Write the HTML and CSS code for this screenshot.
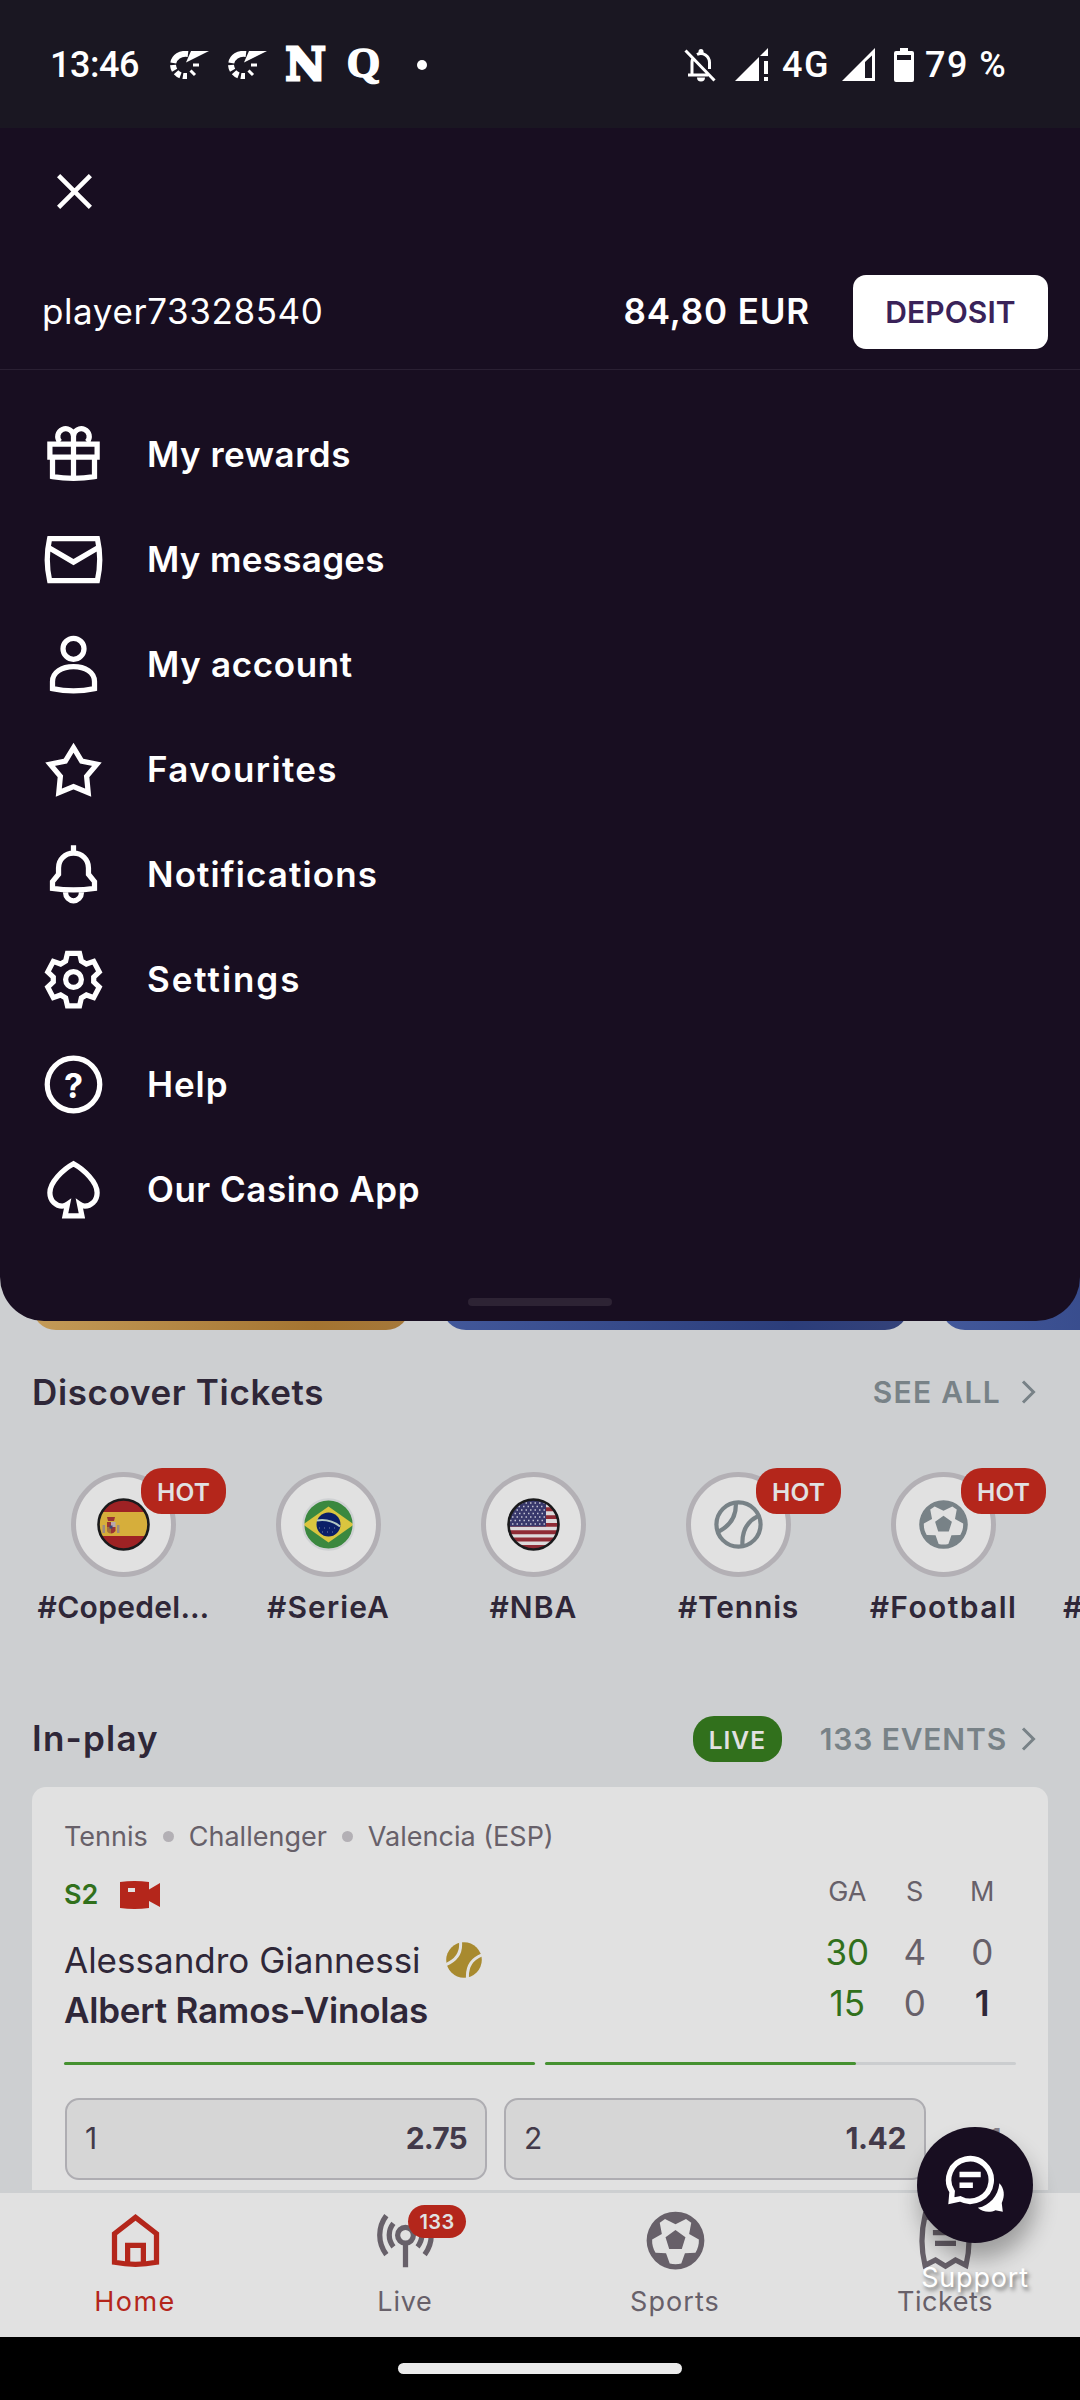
FILE: index.html
```html
<!DOCTYPE html>
<html lang="en">
<head>
<meta charset="utf-8">
<title>Player menu</title>
<link rel="stylesheet" href="styles.css">
</head>
<body>
<svg class="defs" aria-hidden="true">
  <symbol id="football" viewBox="0 0 24 24">
    <path fill="currentColor" fill-rule="evenodd" d="M12 1A11 11 0 1 0 12 23 11 11 0 1 0 12 1ZM12 5.8 16 3.8 18 5.2 17.2 9.5 20.9 11.6C21 13.5 20.5 15.2 19.6 16.7L15.6 16.9 14.2 20.8Q12 21.3 9.8 20.8L8.4 16.9 4.4 16.7C3.5 15.2 3 13.5 3.1 11.6L6.8 9.5 6 5.2 8 3.8ZM12 8 8.2 10.8 9.6 15.2H14.4L15.8 10.8Z"/>
  </symbol>
  <symbol id="swoosh" viewBox="0 0 39 28">
    <path fill="#fff" d="M39 0 16 11.5 21 0Z"/>
    <path fill="none" stroke="#fff" stroke-width="6" d="M18 3C10 2 4.500 6 3.300 12"/>
    <path fill="none" stroke="#fff" stroke-width="6" stroke-dasharray="5.500 2.500" d="M3 14C3.500 20 8 25 14.500 25.200"/>
    <path fill="none" stroke="#fff" stroke-width="3" d="M15.500 22V28M20.500 19.500 25 24M23 14H29"/>
  </symbol>
  <symbol id="chevron" viewBox="0 0 16 24">
    <path fill="none" stroke="currentColor" stroke-width="3" d="M2 1.500 12.500 12 2 22.500"/>
  </symbol>
</svg>

<header class="status">
  <span class="clock">13:46</span>
  <svg class="swoosh"><use href="#swoosh"/></svg>
  <svg class="swoosh"><use href="#swoosh"/></svg>
  <span class="logo-n">N</span>
  <span class="logo-q">Q</span>
  <span class="more"></span>
  <div class="status-right">
    <svg width="32" height="34" viewBox="0 0 32 34" fill="none" stroke="#fff" stroke-width="3">
      <path d="M1.500 2.500 30.500 32.500M4 27H24M8 27V14Q8 12 9 10.500M13 6.500C19 3.500 25.500 8 25.500 14.500V21"/>
      <path fill="#fff" stroke="none" d="M14.500 5V3.500a2.500 2.500 0 0 1 5 0V6ZM13 29.500H21a4 4 0 0 1-8 0Z"/>
    </svg>
    <svg width="33" height="34" viewBox="0 0 33 34" fill="#fff"><path d="M0 33 24 9V33ZM25 8 33 0V8ZM29 13H33V26H29ZM29 29H33V33H29Z"/></svg>
    <span class="net">4G</span>
    <svg width="33" height="34" viewBox="0 0 33 34" fill="#fff"><path fill-rule="evenodd" d="M0 33 33 0V33ZM23 14V30H30V7.500Z"/></svg>
    <svg width="20" height="34" viewBox="0 0 20 34" fill="#fff"><path fill-rule="evenodd" d="M6 0H14V3H18Q20 3 20 5V32Q20 34 18 34H2Q0 34 0 32V5Q0 3 2 3H6ZM3 7V12H17V7Z"/></svg>
    <span class="charge">79 %</span>
  </div>
</header>

<section class="drawer">
  <div class="close-row">
    <svg width="35" height="35" viewBox="0 0 35 35" fill="none" stroke="#fff" stroke-width="4.500"><path d="M1.600 1.600 33.400 33.400M33.400 1.600 1.600 33.400"/></svg>
  </div>
  <div class="account">
    <span class="player">player73328540</span>
    <span class="balance">84,80 EUR</span>
    <button class="deposit">DEPOSIT</button>
  </div>
  <nav class="menu">
    <a class="entry"><svg class="icon" viewBox="0 0 24 24"><path d="M3 8H21V13H3ZM4 13V20.400Q12 21.700 20 20.400V13M12 4.500V21M12 5a3 3 0 1 0-5.200 2.200M12 5a3 3 0 1 1 5.200 2.200"/></svg><span class="t-rewards">My rewards</span></a>
    <a class="entry"><svg class="icon" viewBox="0 0 24 24"><path d="M2.900 4H21.100Q22.900 12 21.100 20H2.900Q1.100 12 2.900 4ZM2.500 7.400 12 13 21.500 7.400"/></svg><span class="t-messages">My messages</span></a>
    <a class="entry"><svg class="icon" viewBox="0 0 24 24"><circle cx="12" cy="6" r="4"/><path d="M4 21.200V18.500C4 15 7.500 12.800 12 12.800S20 15 20 18.500V21.200Q12 22.900 4 21.200Z"/></svg><span class="t-account">My account</span></a>
    <a class="entry"><svg class="icon" viewBox="0 0 24 24"><path d="M12 3.700 15.100 8.800 20.900 10 17 14.600 17.600 20.800 12 18.500 6.400 20.800 7 14.600 3.100 10 8.900 8.800Z"/></svg><span class="t-favourites">Favourites</span></a>
    <a class="entry"><svg class="icon" viewBox="0 0 24 24"><path d="M12 .9V4M4 17.300V14.700L6.300 11.900V9.500C6.300 6.300 8.800 3.900 12 3.900S17.700 6.300 17.700 9.500V11.900L20 14.700V17.300Q12 18.500 4 17.300ZM9 18V19a3 3 0 0 0 6 0V18"/></svg><span class="t-notifications">Notifications</span></a>
    <a class="entry"><svg class="icon" viewBox="0 0 24 24"><circle cx="12" cy="12" r="3"/><path d="M9.700 2H14.300L15 5 16.900 6.100 19.700 5.100 21.800 9.100 19.700 11.100V12.900L21.800 14.900 19.700 18.900 16.900 17.900 15 19 14.300 22H9.700L9 19 7.100 17.900 4.300 18.900 2.200 14.900 4.300 12.900V11.100L2.200 9.100 4.300 5.100 7.100 6.100 9 5Z"/></svg><span class="t-settings">Settings</span></a>
    <a class="entry"><svg class="icon" viewBox="0 0 24 24"><circle cx="12" cy="12" r="10"/><text class="mark" x="12" y="17" text-anchor="middle">?</text></svg><span class="t-help">Help</span></a>
    <a class="entry"><svg class="icon" viewBox="0 0 24 24"><path d="M12 2.200C16.200 4.500 21 9.300 21 13.200C21 16.500 18.500 18.300 16.300 18.300Q15.300 18.300 14.300 17.600L15.200 22H8.800L9.700 17.600Q8.700 18.300 7.700 18.300C5.500 18.300 3 16.500 3 13.200C3 9.300 7.800 4.500 12 2.200Z"/></svg><span class="t-casino">Our Casino App</span></a>
  </nav>
  <span class="handle"></span>
</section>

<main class="page">
  <div class="banners">
    <div class="banner gold"></div>
    <div class="banner blue"></div>
    <div class="banner blue next"></div>
  </div>

  <div class="section-head discover">
    <h2 class="t-discover">Discover Tickets</h2>
    <a class="more-link see-all">SEE ALL<svg class="chevron"><use href="#chevron"/></svg></a>
  </div>

  <div class="tags">
    <div class="tag">
      <div class="disc">
        <svg width="53" height="53" viewBox="0 0 53 53">
          <clipPath id="flag"><circle cx="26.500" cy="26.500" r="25"/></clipPath>
          <g clip-path="url(#flag)"><path fill="#9e2224" d="M0 0H53V53H0Z"/><path fill="#d6ae3b" d="M0 14H53V38H0Z"/>
          <path fill="#9c8a82" d="M5.500 27h2.500v8H5.500zM20 27h2.500v8H20z"/><path fill="#9a3433" d="M10 19h8l-1 4h-6zM10 24h4v5h-4zM14 29h4.500v4q-2 2.500-4.500 2.500z"/><path fill="#b9a6ad" d="M14 24h4.500v5H14z"/><path fill="#a5703a" d="M10 29h4v6.500q-4-.5-4-3z"/><path fill="#3a4473" d="M12.500 27.500h3v3h-3z"/></g>
          <circle cx="26.500" cy="26.500" r="25" fill="none" stroke="#1a1a1c" stroke-width="2.600"/>
        </svg>
        <span class="pill hot">HOT</span>
      </div>
      <span class="tag-name n-cope">#Copedel…</span>
    </div>
    <div class="tag">
      <div class="disc">
        <svg width="53" height="53" viewBox="0 0 53 53">
          <g clip-path="url(#flag)"><path fill="#3b883f" d="M0 0H53V53H0Z"/><path fill="#dac53f" d="M1 26.500 26.500 8.500 52 26.500 26.500 44.500Z"/><circle cx="26.500" cy="26.500" r="12" fill="#0b1f68"/><path fill="none" stroke="#b5c9c4" stroke-width="2" d="M15 22.500Q28 20.500 38 28.500"/><path fill="none" stroke="#7482a5" stroke-dasharray="1 4" d="M17 30H36M20 34H33"/></g>
          <circle cx="26.500" cy="26.500" r="25.200" fill="none" stroke="#cfd1d3" stroke-width="2.200"/>
        </svg>
      </div>
      <span class="tag-name n-serie">#SerieA</span>
    </div>
    <div class="tag">
      <div class="disc">
        <svg width="53" height="53" viewBox="0 0 53 53">
          <g clip-path="url(#flag)"><path fill="#dcdadb" d="M0 0H53V53H0Z"/><path fill="none" stroke="#8f2b35" stroke-width="3.900" d="M0 3.500H53M0 11.300H53M0 19.100H53M0 26.900H53M0 34.300H53M0 41.500H53M0 49H53"/><path fill="#38386b" d="M0 0H39V28.500H0Z"/><path fill="none" stroke="#c3c3d4" stroke-width="1.500" stroke-dasharray="1.500 3" d="M5 5H38M7 8.500H38M5 12H38M3 15.500H38M5 19H38M3 22.500H38M5 26H38"/></g>
          <circle cx="26.500" cy="26.500" r="25" fill="none" stroke="#1a1a1c" stroke-width="2.600"/>
        </svg>
      </div>
      <span class="tag-name n-serie">#NBA</span>
    </div>
    <div class="tag">
      <div class="disc">
        <svg width="53" height="53" viewBox="0 0 24 24" fill="none" stroke="#788287" stroke-width="1.900"><circle cx="12" cy="12" r="10"/><path d="M10.800 2.200Q11.200 11 3 15.200M20.800 8.200Q13.200 12 13.800 21.500"/></svg>
        <span class="pill hot">HOT</span>
      </div>
      <span class="tag-name n-tennis">#Tennis</span>
    </div>
    <div class="tag">
      <div class="disc">
        <svg class="grey" width="53" height="53"><use href="#football"/></svg>
        <span class="pill hot">HOT</span>
      </div>
      <span class="tag-name n-foot">#Football</span>
    </div>
    <div class="tag cut">
      <span class="tag-name">#</span>
    </div>
  </div>

  <div class="section-head inplay">
    <h2 class="t-inplay">In-play</h2>
    <span class="pill live">LIVE</span>
    <a class="more-link events">133 EVENTS<svg class="chevron"><use href="#chevron"/></svg></a>
  </div>

  <article class="card">
    <div class="crumbs"><span>Tennis</span><i class="dot"></i><span>Challenger</span><i class="dot"></i><span>Valencia (ESP)</span></div>
    <div class="match">
      <div class="players">
        <div class="phase"><span>S2</span>
          <svg width="40" height="28" viewBox="0 0 40 28"><path fill="#b4261b" fill-rule="evenodd" d="M0 1Q14.500-1 29 1V8.500L40 2V26L29 20V27Q14.500 29 0 27ZM8 7V11H15V7Z"/></svg>
        </div>
        <div class="name">Alessandro Giannessi
          <svg width="36" height="36" viewBox="0 0 36 36"><circle cx="18" cy="18" r="17.800" fill="#a88a2f"/><path fill="none" stroke="#e1e1e1" stroke-width="3" d="M14.500 0Q16 16 0 22.500M36 13Q20.500 19 21.500 36"/></svg>
        </div>
        <div class="name strong">Albert Ramos-Vinolas</div>
      </div>
      <div class="scores">
        <span class="h">GA</span><span class="h">S</span><span class="h">M</span>
        <span class="game">30</span><span>4</span><span>0</span>
        <span class="game">15</span><span>0</span><span class="won">1</span>
      </div>
    </div>
    <div class="progress">
      <div class="track"><div class="fill" style="width:100%"></div></div>
      <div class="track"><div class="fill" style="width:66%"></div></div>
    </div>
    <div class="odds">
      <div class="odd"><span>1</span><b>2.75</b></div>
      <div class="odd"><span>2</span><b class="wide">1.42</b></div>
      <span class="extra">1</span>
    </div>
  </article>
</main>

<nav class="tabs">
  <a class="tab active"><svg class="icon" viewBox="0 0 24 24"><path d="M4 20.300V9.400L12 3.200 20 9.400V20.300Q12 21.800 4 20.300ZM9 20.500V13.900H15V20.500"/></svg><span class="l-home">Home</span></a>
  <a class="tab"><svg class="icon" viewBox="0 0 24 24"><circle cx="12" cy="10" r="3"/><path d="M12 13V22.200M4.700 2.500A12.300 12.300 0 0 0 4.700 17.400M7.400 5.500A7 7 0 0 0 7.400 14.400M19.300 2.500A12.300 12.300 0 0 1 19.300 17.400M16.600 5.500A7 7 0 0 1 16.600 14.400"/></svg><span class="count">133</span><span class="l-live">Live</span></a>
  <a class="tab"><svg class="icon solid"><use href="#football"/></svg><span class="l-sports">Sports</span></a>
  <a class="tab"><svg class="icon" viewBox="0 0 24 24"><path d="M4.200 21.500Q1.900 12 4.200 2.500L8.200 4.500 12 2.200 15.800 4.500 19.800 2.500Q22.100 12 19.800 21.500L15.800 19.400 12 21.800 8.200 19.400ZM7.200 9H16.800M8 13.100H16"/></svg><span class="l-tickets">Tickets</span></a>
</nav>

<footer class="gesture"><span class="bar"></span></footer>

<aside class="support">
  <div class="bubble">
    <svg width="63" height="63" viewBox="0 0 24 24">
      <path fill="none" stroke="#fff" stroke-width="2.100" d="M3.100 14.300A8.100 8.100 0 1 1 6.200 17.100L2.800 17.800ZM5.900 7.800H14M5.900 11.900H11"/>
      <path fill="#fff" d="M21.100 11.100C23 13.200 23.300 15.700 22 18.700L22.400 22 19.600 21.400C17.500 22.500 14.500 22 12.900 20.500C17.500 19.500 20.600 16 21.100 11.100Z"/>
    </svg>
  </div>
  <span class="support-label">Support</span>
</aside>
</body>
</html>
```
FILE: styles.css
```css
* { box-sizing: border-box; }

body {
  margin: 0;
  width: 1080px;
  height: 2400px;
  display: flex;
  flex-direction: column;
  position: relative;
  overflow: hidden;
  background: #cdcfd1;
  color: #2f2738;
  font-family: Inter, Roboto, sans-serif;
}

.defs { position: absolute; width: 0; height: 0; }
h2 { margin: 0; font-size: 35px; font-weight: 600; }
span, a { white-space: nowrap; }

/* status bar */
.status {
  flex: none;
  height: 128px;
  padding: 1px 75px 0 50px;
  display: flex;
  align-items: center;
  background: #1a1722;
  color: #fff;
  font: 500 36px/1 Roboto, sans-serif;
}
.clock { width: 120px; padding-top: 1px; letter-spacing: -0.5px; }
.swoosh { width: 39px; height: 28px; margin-right: 19px; }
.logo-n, .logo-q {
  width: 39px;
  display: flex;
  justify-content: center;
  font: 700 44px/1 "DejaVu Serif", serif;
  -webkit-text-stroke: 3px #fff;
}
.logo-n { margin-right: 23px; }
.logo-q {
  width: 31px;
  margin: -4px 38px 0 0;
  font: 700 43px/1 "Liberation Serif", serif;
  -webkit-text-stroke-width: 1.5px;
}
.more { width: 10px; height: 10px; border-radius: 50%; background: #fff; }
.status-right { margin-left: auto; display: flex; align-items: center; }
.status-right svg:nth-of-type(1) { margin-right: 19px; }
.net { width: 60px; margin-left: 14px; padding-top: 1px; letter-spacing: 1.5px; }
.status-right svg:nth-of-type(3) { margin-right: 19px; }
.charge { width: 80px; margin-left: 11px; padding-top: 1px; letter-spacing: 1.5px; }

/* drawer */
.drawer {
  flex: none;
  height: 1193px;
  display: flex;
  flex-direction: column;
  position: relative;
  z-index: 1;
  background: #180e21;
  color: #fff;
  border-radius: 0 0 44px 44px;
}
.close-row { height: 127px; padding: 46px 57px 0; }
.close-row svg { display: block; }
.account {
  height: 115px;
  padding: 0 32px 0 42px;
  display: flex;
  align-items: center;
  border-bottom: 1px solid #2a2033;
  font-size: 35px;
}
.player { padding-bottom: 2px; letter-spacing: 0.6px; }
.balance { margin-left: auto; padding-bottom: 2px; font-weight: 600; letter-spacing: 0.85px; }
.deposit {
  width: 195px;
  height: 74px;
  margin-left: 43px;
  padding: 0;
  border: 0;
  border-radius: 13px;
  background: #fff;
  color: #3a2259;
  font: 600 30px/72px Inter, sans-serif;
  letter-spacing: 0.1px;
}
.menu { padding: 32px 42px 0; }
.entry {
  height: 105px;
  display: flex;
  align-items: center;
  gap: 42px;
  font-size: 35px;
  font-weight: 600;
}
.entry span { padding-bottom: 2px; }
.icon {
  width: 63px;
  height: 63px;
  flex: none;
  fill: none;
  stroke: currentColor;
  stroke-width: 2;
}
.icon.solid { stroke: none; }
.mark { font: 700 13px Inter, sans-serif; fill: #fff; stroke: none; }
.t-rewards { letter-spacing: 0.5px; }
.t-account { letter-spacing: 0.65px; }
.t-messages { letter-spacing: 0.3px; }
.t-favourites { letter-spacing: 1.35px; }
.t-notifications { letter-spacing: 1.1px; }
.t-settings { letter-spacing: 1.95px; }
.t-help { letter-spacing: 0.9px; }
.t-casino { letter-spacing: 0.5px; }
.handle {
  width: 144px;
  height: 8px;
  margin: 56px auto 0;
  border-radius: 4px;
  background: #2d2334;
}

/* page behind the drawer */
.page { flex: 1; min-height: 0; }
.banners {
  height: 59px;
  margin-top: -50px;
  padding-left: 32px;
  display: flex;
  gap: 32px;
}
.banner { flex: none; width: 467px; border-radius: 0 0 24px 24px; }
.banner.gold { width: 378px; background: linear-gradient(90deg, #c49b58, #a47431 75%, #a5783a); }
.banner.blue { background: linear-gradient(90deg, #42589b, #2b3d7a 75%, #344279); background-size: 467px 100%; }
.banner.next { flex: 1; width: auto; border-radius: 0 0 0 24px; }

.section-head { display: flex; align-items: center; padding: 0 43px 0 32px; }
.discover { height: 50px; margin-top: 37px; }
.t-discover { letter-spacing: 0.65px; }
.t-inplay { padding-bottom: 2px; letter-spacing: 1.2px; }
.more-link {
  display: flex;
  align-items: center;
  color: #788287;
  font-size: 30px;
  font-weight: 600;
}
.see-all { margin-left: auto; gap: 20px; letter-spacing: 1.3px; }
.events { margin-left: 38px; gap: 14px; letter-spacing: 0.85px; }
.chevron { width: 16px; height: 24px; }

.tags { display: flex; height: 170px; margin-top: 45px; padding: 10px 0 0 21px; }
.tag { flex: none; width: 205px; display: flex; flex-direction: column; align-items: center; }
.tag.cut { flex: 1; width: auto; align-items: flex-start; padding: 105px 0 0 17px; }
.disc {
  position: relative;
  width: 105px;
  height: 105px;
  display: flex;
  align-items: center;
  justify-content: center;
  border: 5px solid #b3b0b5;
  border-radius: 50%;
  background: #e1e1e1;
}
.grey { color: #788287; }
.pill {
  width: 85px;
  height: 46px;
  border-radius: 21px;
  color: #e1e1e1;
  font-size: 24.5px;
  font-weight: 600;
  line-height: 48px;
  text-align: center;
  letter-spacing: 0.2px;
}
.hot { position: absolute; left: 65px; top: -9px; background: #b4261b; }
.live { width: 89px; margin-left: auto; background: #31701c; letter-spacing: 1px; }
.tag-name { margin-top: 10px; font-size: 30px; font-weight: 600; line-height: 40px; }
.n-cope { letter-spacing: 0.3px; }
.n-serie { letter-spacing: 1.1px; }
.n-tennis { letter-spacing: 0.8px; }
.n-foot { letter-spacing: 1.4px; }

.inplay { height: 46px; margin-top: 84px; }

/* match card */
.card {
  height: 440px;
  margin: 25px 32px 0;
  padding: 29px 32px 0;
  border-radius: 14px;
  background: #e1e1e1;
}
.crumbs { display: flex; align-items: center; gap: 15px; height: 40px; font-size: 27px; color: #676069; }
.dot { width: 11px; height: 11px; border-radius: 50%; background: #b3b0b5; }
.match { display: flex; justify-content: space-between; height: 179px; }
.players { padding-top: 18px; }
.phase {
  display: flex;
  align-items: center;
  gap: 22px;
  height: 41px;
  margin-bottom: 20px;
  color: #31701c;
  font-size: 27px;
  font-weight: 600;
}
.name { display: flex; align-items: center; gap: 25px; height: 50px; font-size: 35px; white-space: nowrap; }
.name.strong { font-weight: 600; letter-spacing: -0.2px; }
.scores {
  display: grid;
  grid-template-columns: repeat(3, 67.5px);
  grid-template-rows: 55px 51px 51px;
  padding-top: 16px;
  line-height: 51px;
  text-align: center;
  color: #676069;
  font-size: 35px;
}
.scores .h { font-size: 27px; line-height: 40px; }
.scores .game { color: #31701c; }
.scores .won { color: #2f2738; font-weight: 600; }
.progress { display: grid; grid-template-columns: 1fr 1fr; gap: 10px; margin-top: 27px; }
.track { height: 3px; border-radius: 2px; background: #cbcdcf; }
.fill { height: 3px; border-radius: 2px; background: #459130; }
.odds { display: flex; align-items: center; gap: 17px; margin-top: 33px; padding-left: 1px; color: #433a4a; font-size: 30px; }
.odd {
  width: 422px;
  height: 82px;
  padding: 0 18px 2px;
  display: flex;
  align-items: center;
  justify-content: space-between;
  border: 2px solid #aeadb2;
  border-radius: 14px;
  background: #d6d6d6;
}
.odd b { font-weight: 700; letter-spacing: -0.8px; }
.odd b.wide { letter-spacing: -0.4px; }
.extra { margin-left: 46px; color: #85808a; font-weight: 600; }

/* bottom navigation */
.tabs {
  flex: none;
  height: 147px;
  display: grid;
  grid-template-columns: repeat(4, 1fr);
  position: relative;
  border-top: 3px solid #cdcfd1;
  background: #e1e1e1;
}
.tab {
  position: relative;
  display: flex;
  flex-direction: column;
  align-items: center;
  padding-top: 16px;
  color: #676069;
  font-size: 27px;
  line-height: 40px;
}
.tab .icon { margin-bottom: 10px; }
.tab.active { color: #b4261b; }
.count {
  position: absolute;
  left: 138px;
  top: 12px;
  width: 58px;
  height: 33px;
  border-radius: 17px;
  background: #b4261b;
  color: #e1e1e1;
  font-size: 20px;
  font-weight: 600;
  line-height: 34px;
  text-align: center;
  letter-spacing: 0.3px;
}
.l-home { letter-spacing: 1.5px; }
.l-live { letter-spacing: 0.77px; }
.l-sports { letter-spacing: 1.05px; }
.l-tickets { letter-spacing: 0.56px; }

.gesture { flex: none; height: 63px; padding-top: 26px; background: #000; }
.bar { display: block; width: 284px; height: 11px; margin: 0 auto; border-radius: 6px; background: #ebebeb; }

/* floating support button */
.support {
  position: absolute;
  left: 912px;
  top: 2127px;
  width: 126px;
  display: flex;
  flex-direction: column;
  align-items: center;
  z-index: 2;
}
.bubble {
  width: 116px;
  height: 116px;
  display: flex;
  align-items: center;
  justify-content: center;
  border-radius: 50%;
  background: #180e21;
  box-shadow: 3px 16px 22px rgba(0, 0, 0, 0.3);
}
.support-label {
  margin-top: 15px;
  color: #fff;
  font-size: 27px;
  line-height: 40px;
  letter-spacing: 0.8px;
  text-shadow: 2px 3px 4px rgba(0, 0, 0, 0.55);
}
```
